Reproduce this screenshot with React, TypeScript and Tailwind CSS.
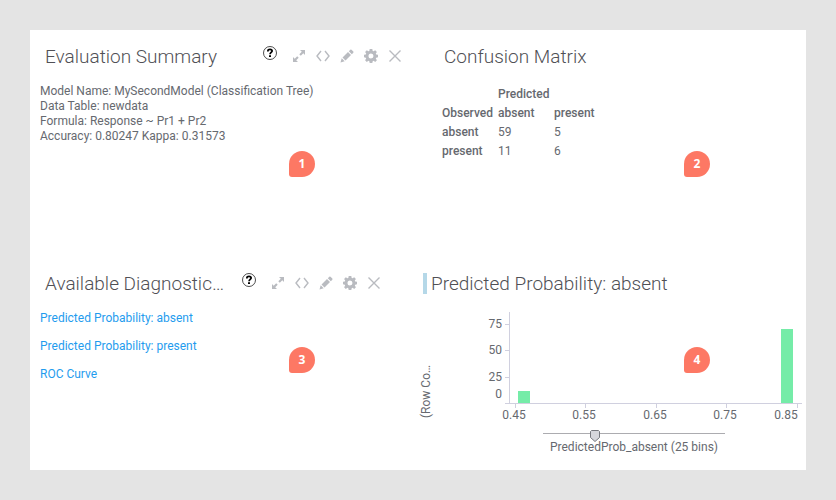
import { useState, type ReactNode } from 'react';

type Tick = { label: string; at: number; textAt: number };

const yTicks: Tick[] = [
    { label: '75', at: 24, textAt: 28 },
    { label: '50', at: 50, textAt: 54 },
    { label: '25', at: 77, textAt: 81 },
    { label: '0', at: 103, textAt: 98 },
];

const xTicks: Tick[] = [
    { label: '0.45', at: 97, textAt: 96 },
    { label: '0.55', at: 167, textAt: 166 },
    { label: '0.65', at: 238, textAt: 237 },
    { label: '0.75', at: 308, textAt: 307 },
    { label: '0.85', at: 379, textAt: 368 },
];

const bars = [
    { x: 100, height: 12 },
    { x: 363, height: 74 },
];

const matrix = [
    { observed: 'absent', absent: 59, present: 5 },
    { observed: 'present', absent: 11, present: 6 },
];

const diagnostics = ['Predicted Probability: absent', 'Predicted Probability: present', 'ROC Curve'];

function IconButton({ label, children }: { label: string; children: ReactNode }) {
    return (
        <button type="button" aria-label={label} className="size-3.5 shrink-0 text-[#b9bbc0]">
            <svg viewBox="0 0 14 14" className="block size-3.5" fill="currentColor">
                {children}
            </svg>
        </button>
    );
}

function Toolbar() {
    return (
        <div className="flex items-center pb-0.5">
            <button type="button" aria-label="Help" className="mr-[15px] mb-1.5 size-3.5 shrink-0">
                <svg viewBox="0 0 14 14" className="block size-3.5" fill="none" stroke="#000">
                    <circle cx="7" cy="7" r="6.5" strokeWidth="0.7" />
                    <path d="M4.9 5.4V5c0-1.1.9-1.7 2.1-1.7s2.1.6 2.1 1.7c0 1.4-2 1.5-2 3.2" strokeWidth="1.8" />
                    <path d="M6 10.2h2" strokeWidth="1.8" />
                </svg>
            </button>
            <div className="flex gap-2.5">
                <IconButton label="Maximize">
                    <path d="M8 1h5v5l-1.7-1.7-2.5 2.5-1.5-1.5 2.5-2.5zM1 13V8l1.7 1.7 2.5-2.5 1.5 1.5-2.5 2.5L6 13z" />
                </IconButton>
                <IconButton label="Edit script">
                    <path d="M5 2 1 7l4 5M9 2l4 5-4 5" fill="none" stroke="currentColor" strokeWidth="1.4" />
                </IconButton>
                <IconButton label="Edit">
                    <path d="m.5 13.5 1.2-4.2 3 3zM2.5 8.5 8 3l3 3-5.5 5.5zM8.8 2.2 10.3.7q.6-.5 1.2 0l1.8 1.8q.5.6 0 1.2l-1.5 1.5z" />
                </IconButton>
                <IconButton label="Settings">
                    <path
                        fillRule="evenodd"
                        d="M5.7 0h2.6l.4 1.9.9.4 1.6-1.1 1.7 1.7-1.1 1.6.4.9 1.8.3v2.6l-1.8.4-.4.9 1.1 1.6-1.7 1.7-1.6-1.1-.9.4L8.3 14H5.7l-.4-1.8-.9-.4-1.6 1.1-1.7-1.7 1.1-1.6-.4-.9L0 8.3V5.7l1.8-.3.4-.9-1.1-1.6 1.7-1.7 1.6 1.1.9-.4zM7 4.5a2.5 2.5 0 1 0 0 5 2.5 2.5 0 0 0 0-5z"
                    />
                </IconButton>
                <IconButton label="Close">
                    <path d="m1.5 1.5 11 11m0-11-11 11" fill="none" stroke="currentColor" strokeWidth="1.4" />
                </IconButton>
            </div>
        </div>
    );
}

function Title({ children }: { children: ReactNode }) {
    return <h2 className="text-[19px] leading-[26px] font-light whitespace-nowrap text-[#505055]">{children}</h2>;
}

function Marker({ n, className }: { n: number; className: string }) {
    return (
        <span
            className={`absolute flex size-[26px] items-center justify-center rounded-[13px] rounded-bl-[3px] bg-[#fd7864] font-["Open_Sans",sans-serif] text-xs font-bold text-white ${className}`}
        >
            {n}
        </span>
    );
}

function Histogram() {
    return (
        <svg viewBox="0 0 388 126" className="block w-full text-xs" role="img" aria-label="Predicted probability histogram">
            <g fill="#75eca8">
                {bars.map((bar) => (
                    <rect key={bar.x} x={bar.x} y={103 - bar.height} width="12" height={bar.height} />
                ))}
            </g>
            <g fill="#d0d0df">
                <rect x="91" y="12" width="1" height="92" />
                <rect x="87" y="103" width="297" height="1" />
                {yTicks.map((tick) => (
                    <rect key={tick.label} x="87" y={tick.at} width="4" height="1" />
                ))}
                {xTicks.map((tick) => (
                    <rect key={tick.label} x={tick.at} y="104" width="1" height="4" />
                ))}
            </g>
            <g fill="#66696f">
                {yTicks.map((tick) => (
                    <text key={tick.label} x="84" y={tick.textAt} textAnchor="end">
                        {tick.label}
                    </text>
                ))}
                {xTicks.map((tick) => (
                    <text key={tick.label} x={tick.textAt} y="119" textAnchor="middle">
                        {tick.label}
                    </text>
                ))}
                <text transform="translate(12 118) rotate(-90)">(Row Co…</text>
            </g>
        </svg>
    );
}

function BinSlider() {
    const [bins, setBins] = useState(25);
    const max = 88;

    return (
        <div className="pl-11">
            <div className="mx-auto w-[53%] text-center">
                <div className="relative h-3.5">
                    <div className="h-2 border-b border-[#acacb0]" />
                    <input
                        id="bins"
                        type="range"
                        min={1}
                        max={max}
                        value={bins}
                        onChange={(e) => setBins(Number(e.target.value))}
                        className="absolute inset-0 w-full cursor-pointer opacity-0"
                    />
                    <svg
                        viewBox="0 0 10 12"
                        className="pointer-events-none absolute top-1 h-3 w-2.5 -translate-x-1/2"
                        style={{ left: `${(bins / max) * 100}%` }}
                    >
                        <path d="M1.5.5h7l1 1v6L5 11.5.5 7.5v-6z" fill="#d6d7dc" stroke="#77797f" />
                    </svg>
                </div>
                <label htmlFor="bins" className="block text-xs leading-[14px] whitespace-nowrap">
                    PredictedProb_absent ({bins} bins)
                </label>
            </div>
        </div>
    );
}

export default function App() {
    return (
        <div className='min-h-screen bg-[#e4e4e4] p-[30px] font-["Roboto",sans-serif] text-xs text-[#66696f]'>
            <main className="grid grid-cols-2 bg-white">
                <section className="relative min-h-[227px] pt-3.5">
                    <div className="flex items-center justify-between pr-4 pl-[15px]">
                        <Title>Evaluation Summary</Title>
                        <Toolbar />
                    </div>
                    <div className="mt-3.5 pl-2.5 leading-[15px]">
                        <p>Model Name: MySecondModel (Classification Tree)</p>
                        <p>Data Table: newdata</p>
                        <p>Formula: Response ~ Pr1 + Pr2</p>
                        <p>Accuracy: 0.80247 Kappa: 0.31573</p>
                    </div>
                    <Marker n={1} className="top-[121px] left-[259px]" />
                </section>

                <section className="relative pt-3.5 pl-6">
                    <div className="pl-0.5">
                        <Title>Confusion Matrix</Title>
                    </div>
                    <table className="mt-[15px] table-fixed text-left leading-[19px]">
                        <thead>
                            <tr>
                                <td className="w-14" />
                                <th colSpan={2} scope="colgroup" className="font-medium">
                                    Predicted
                                </th>
                            </tr>
                            <tr>
                                <th scope="col" className="w-14 font-medium">Observed</th>
                                <th scope="col" className="w-14 font-medium">absent</th>
                                <th scope="col" className="w-14 font-medium">present</th>
                            </tr>
                        </thead>
                        <tbody>
                            {matrix.map((row) => (
                                <tr key={row.observed}>
                                    <th scope="row" className="font-medium">{row.observed}</th>
                                    <td>{row.absent}</td>
                                    <td>{row.present}</td>
                                </tr>
                            ))}
                        </tbody>
                    </table>
                    <Marker n={2} className="top-[121px] left-[266px]" />
                </section>

                <section className="relative pt-3.5">
                    <div className="flex items-center justify-between pr-[37px] pl-[15px]">
                        <Title>Available Diagnostic…</Title>
                        <Toolbar />
                    </div>
                    <ul className="mt-[7px] pl-2.5 leading-7">
                        {diagnostics.map((name) => (
                            <li key={name}>
                                <a href="#" className="text-[#1f9cee]">{name}</a>
                            </li>
                        ))}
                    </ul>
                    <Marker n={3} className="top-[90px] left-[259px]" />
                </section>

                <section className="relative pt-3.5 pb-4">
                    <div className="flex items-center gap-1 pl-[5px]">
                        <span className="mb-0.5 h-[21px] w-1 bg-[#b5d8e8]" />
                        <Title>Predicted Probability: absent</Title>
                    </div>
                    <div className="mt-[3px]">
                        <Histogram />
                        <BinSlider />
                    </div>
                    <Marker n={4} className="top-[90px] left-[266px]" />
                </section>
            </main>
        </div>
    );
}
